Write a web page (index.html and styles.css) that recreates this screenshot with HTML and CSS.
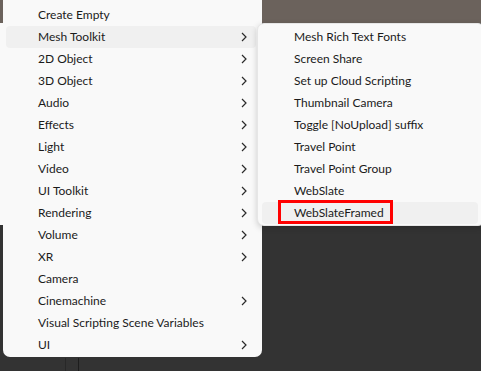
FILE: index.html
```html
<!DOCTYPE html>
<html>
<head>
  <meta name="viewport" content="width=device-width, initial-scale=1">
  <title>GameObject Menu</title>
  <link rel="stylesheet" href="styles.css">
</head>
<body>
  <div class="menu main-menu">
    <div class="menu-item">Create Empty</div>
    <div class="menu-item active has-sub">Mesh Toolkit</div>
    <div class="menu-item has-sub">2D Object</div>
    <div class="menu-item has-sub">3D Object</div>
    <div class="menu-item has-sub">Audio</div>
    <div class="menu-item has-sub">Effects</div>
    <div class="menu-item has-sub">Light</div>
    <div class="menu-item has-sub">Video</div>
    <div class="menu-item has-sub">UI Toolkit</div>
    <div class="menu-item has-sub">Rendering</div>
    <div class="menu-item has-sub">Volume</div>
    <div class="menu-item has-sub">XR</div>
    <div class="menu-item">Camera</div>
    <div class="menu-item has-sub">Cinemachine</div>
    <div class="menu-item">Visual Scripting Scene Variables</div>
    <div class="menu-item has-sub">UI</div>
  </div>

  <div class="menu sub-menu">
    <div class="menu-item">Mesh Rich Text Fonts</div>
    <div class="menu-item">Screen Share</div>
    <div class="menu-item">Set up Cloud Scripting</div>
    <div class="menu-item">Thumbnail Camera</div>
    <div class="menu-item">Toggle [NoUpload] suffix</div>
    <div class="menu-item">Travel Point</div>
    <div class="menu-item">Travel Point Group</div>
    <div class="menu-item">WebSlate</div>
    <div class="menu-item active">WebSlateFramed<span class="callout"></span></div>
  </div>

  <script>
    // add the little submenu arrows
    const arrow = '<svg class="chevron" width="6" height="10" viewBox="0 0 6 10"><polyline points="1,1 5,5 1,9" fill="none" stroke="#2b2b2b" stroke-width="1.2"/></svg>';
    document.querySelectorAll('.has-sub').forEach(item => {
      item.innerHTML = '<span class="label">' + item.textContent + '</span>' + arrow;
    });
  </script>
</body>
</html>
```

FILE: styles.css
```css
body {
  margin: 0;
  width: 481px;
  height: 371px;
  overflow: hidden;
  position: relative;
  font-family: Lato, "Open Sans", sans-serif;
  font-size: 12px;
  color: #1b1b1b;
  background:
    linear-gradient(#f9f9f9, #f9f9f9) 0 23px / 3px 202px no-repeat,
    linear-gradient(#282828, #282828) 65px 358px / 1px 13px no-repeat,
    linear-gradient(#1d1d1d, #1d1d1d) 78px 358px / 1px 13px no-repeat,
    linear-gradient(#6b625c 0 23px, #333333 23px);
}

.menu {
  position: absolute;
  background: #f9f9f9;
  box-sizing: border-box;
}

.main-menu {
  left: 3px;
  top: 0;
  width: 259px;
  height: 357px;
  padding: 4px 6px 0 3px;
  border-radius: 0 0 7px 7px;
}

.sub-menu {
  left: 257px;
  top: 23px;
  width: 228px;
  height: 203px;
  padding: 2px 6px 0 4px;
  border-radius: 7px;
  border: 1px solid #e6e6e6;
  box-shadow: 0 2px 6px rgba(0, 0, 0, 0.18);
}

.menu-item {
  height: 22px;
  box-sizing: border-box;
  display: flex;
  align-items: center;
  justify-content: space-between;
  padding: 0 9px 1px 32px;
  border-radius: 4px;
  position: relative;
  white-space: nowrap;
}

.menu-item.active {
  background: #f0f0f0;
}

.chevron {
  display: block;
}

.callout {
  position: absolute;
  left: 16px;
  top: -2px;
  width: 115px;
  height: 24px;
  box-sizing: border-box;
  border: 3px solid #ff0000;
}
```
